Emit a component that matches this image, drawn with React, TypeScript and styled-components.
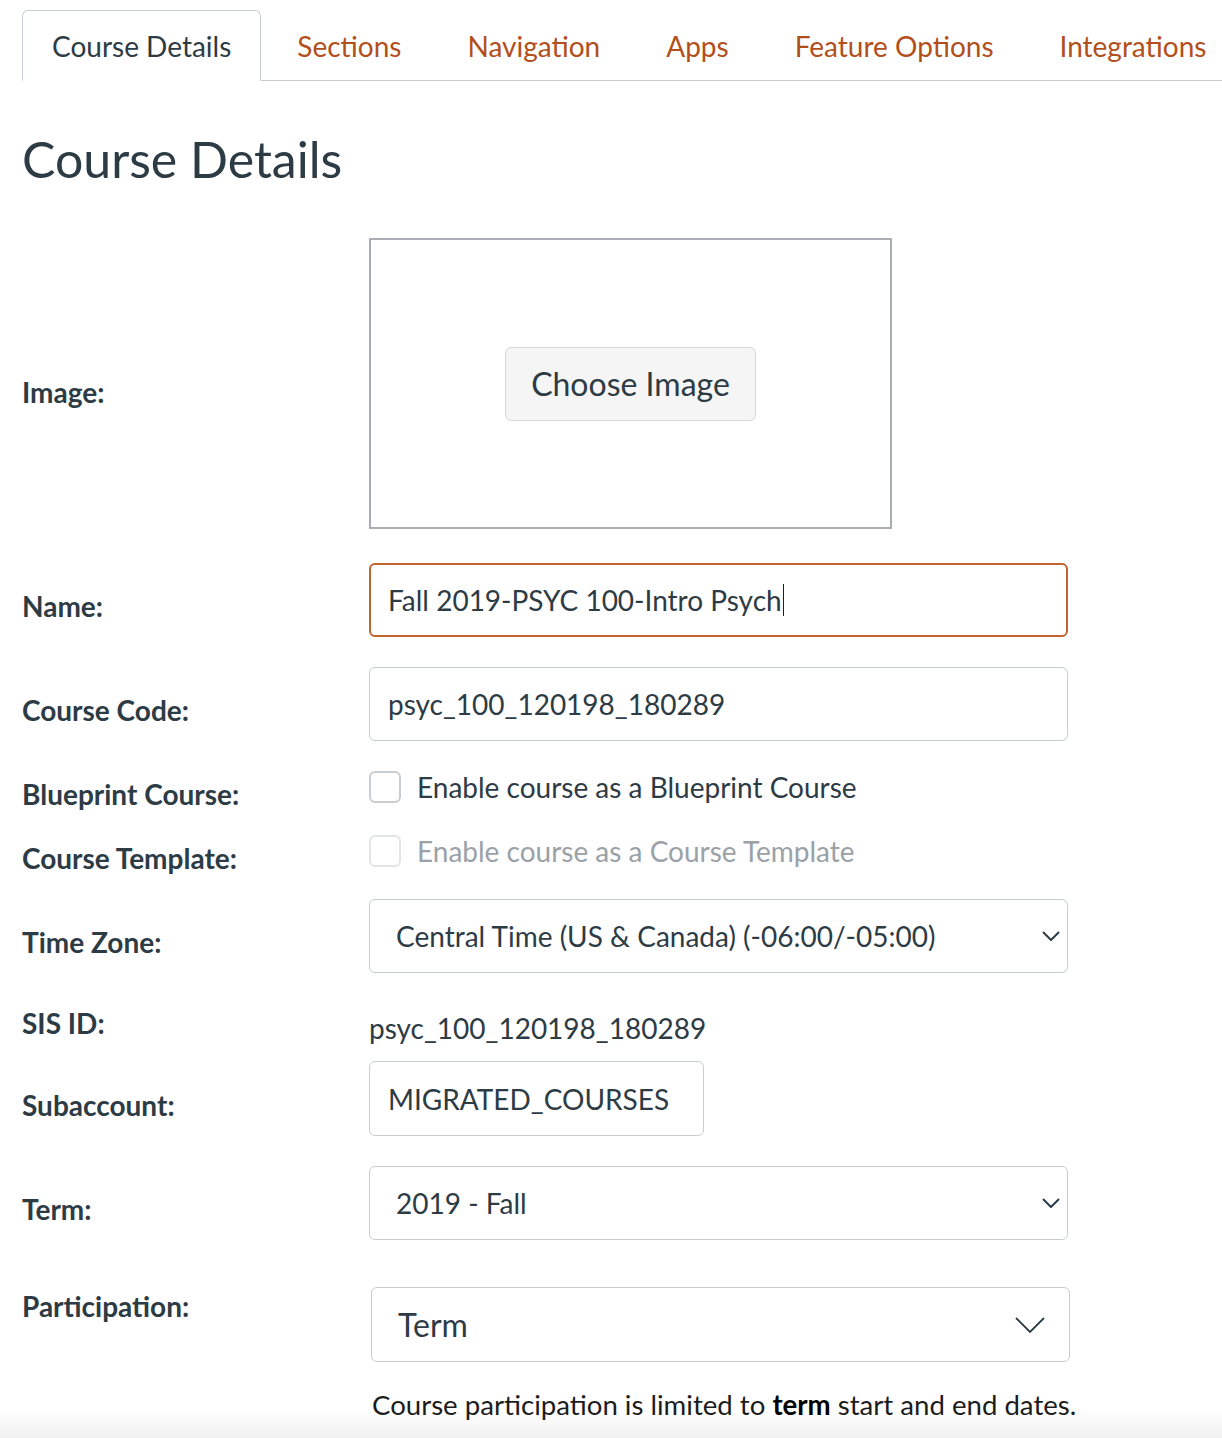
import React from "react";
import styled, { createGlobalStyle } from "styled-components";

const GlobalStyle = createGlobalStyle`
  html, body {
    margin: 0;
    padding: 0;
  }
  body {
    font-family: Lato, "Helvetica Neue", Arial, sans-serif;
    color: #2d3b45;
    background: linear-gradient(180deg, #ffffff 0px, #ffffff 1410px, #f1f1f1 1438px) no-repeat;
    min-height: 1438px;
  }
  * { box-sizing: border-box; }
`;

const Page = styled.div`
  padding-top: 10px;
  min-height: 1438px;
`;

const TabList = styled.ul`
  display: flex;
  list-style: none;
  margin: 0 0 0 22px;
  padding: 0;
  border-bottom: 1px solid #c7cdd1;
`;

const Tab = styled.li<{ $active?: boolean }>`
  display: flex;
  align-items: center;
  height: 71px;
  margin: 0 6px -1px 0;
  padding: 0 29px;
  border: 1px solid ${(p) => (p.$active ? "#c7cdd1" : "transparent")};
  border-bottom-color: ${(p) => (p.$active ? "#ffffff" : "transparent")};
  border-radius: 6px 6px 0 0;
  background: ${(p) => (p.$active ? "#ffffff" : "transparent")};
  font-size: 28px;
  line-height: 32px;
  color: ${(p) => (p.$active ? "#2d3b45" : "#b24f1b")};
  white-space: nowrap;
`;

const Heading = styled.h1`
  margin: 50px 0 0;
  padding-left: 22px;
  font-size: 50px;
  line-height: 56px;
  font-weight: 400;
  color: #2d3b45;
`;

const Form = styled.div`
  padding: 0 22px;
`;

const Row = styled.div<{ $mt: number }>`
  display: grid;
  grid-template-columns: 347px auto;
  align-items: start;
  margin-top: ${(p) => p.$mt}px;
`;

const Label = styled.div<{ $pad: number }>`
  padding-top: ${(p) => p.$pad}px;
  font-size: 28px;
  line-height: 32px;
  font-weight: 700;
  color: #2d3b45;
  white-space: nowrap;
`;

const ImageBox = styled.div`
  width: 523px;
  height: 291px;
  border: 2px solid #a8aeb3;
  display: flex;
  align-items: center;
  justify-content: center;
  background: #fff;
`;

const ChooseButton = styled.button`
  height: 74px;
  padding: 0 25px;
  background: #f5f5f5;
  border: 1px solid #d6d9db;
  border-radius: 6px;
  font-family: inherit;
  font-size: 32px;
  color: #2d3b45;
`;

const Field = styled.div<{ $focused?: boolean; $inline?: boolean }>`
  display: flex;
  align-items: center;
  width: ${(p) => (p.$inline ? "auto" : "699px")};
  justify-self: start;
  height: ${(p) => (p.$inline ? "75px" : "74px")};
  padding: ${(p) => (p.$focused ? "0 17px" : p.$inline ? "0 34px 0 18px" : "0 18px")};
  border: ${(p) => (p.$focused ? "2px solid #c0642f" : "1px solid #c7cdd1")};
  border-radius: 6px;
  font-size: 28px;
  line-height: 32px;
  color: #2d3b45;
  background: #fff;
  white-space: nowrap;
`;

const Caret = styled.span`
  display: inline-block;
  width: 0;
  height: 32px;
  border-right: 1.5px solid #1f1f1f;
  margin-left: 1px;
  vertical-align: middle;
`;

const Select = styled.div<{ $large?: boolean }>`
  display: flex;
  align-items: center;
  justify-content: space-between;
  width: 699px;
  height: ${(p) => (p.$large ? "75px" : "74px")};
  margin-left: ${(p) => (p.$large ? "2px" : "0")};
  padding: ${(p) => (p.$large ? "0 24px 0 26px" : "0 7px 0 26px")};
  border: 1px solid #c7cdd1;
  border-radius: 6px;
  font-size: ${(p) => (p.$large ? "32px" : "28px")};
  line-height: 32px;
  color: #2d3b45;
  background: #fff;
  white-space: nowrap;
`;

const CheckRow = styled.label<{ $disabled?: boolean }>`
  display: flex;
  align-items: center;
  gap: 16px;
  font-size: 28px;
  line-height: 32px;
  color: ${(p) => (p.$disabled ? "#9aa1a7" : "#2d3b45")};
  white-space: nowrap;
`;

const Box = styled.span<{ $disabled?: boolean }>`
  display: inline-block;
  width: 32px;
  height: 32px;
  border: 2px solid ${(p) => (p.$disabled ? "#e3e6e8" : "#c7cdd1")};
  border-radius: 6px;
  background: #fff;
  flex: none;
`;

const PlainValue = styled.div<{ $pad: number }>`
  padding-top: ${(p) => p.$pad}px;
  font-size: 28px;
  line-height: 32px;
  color: #2d3b45;
`;

const ControlStack = styled.div`
  display: flex;
  flex-direction: column;
  align-items: flex-start;
`;

const Help = styled.p`
  margin: 27px 0 0 3px;
  font-size: 27.6px;
  line-height: 32px;
  color: #1c1c1c;
  white-space: nowrap;
  b { font-weight: 700; color: #000; }
`;

const Chevron: React.FC<{ large?: boolean }> = ({ large }) =>
  large ? (
    <svg width="30" height="16" viewBox="0 0 30 16" aria-hidden="true">
      <path d="M1 1 L15 15 L29 1" fill="none" stroke="#2d3b45" strokeWidth="1.8" />
    </svg>
  ) : (
    <svg width="18" height="10" viewBox="0 0 18 10" aria-hidden="true">
      <path d="M1 1 L9 9 L17 1" fill="none" stroke="#2d3b45" strokeWidth="2" />
    </svg>
  );

const tabs = ["Course Details", "Sections", "Navigation", "Apps", "Feature Options", "Integrations"];

export default function App() {
  return (
    <>
      <GlobalStyle />
      <Page>
        <TabList>
          {tabs.map((t, i) => (
            <Tab key={t} $active={i === 0}>
              {t}
            </Tab>
          ))}
        </TabList>

        <Heading>Course Details</Heading>

        <Form>
          <Row $mt={51}>
            <Label $pad={138}>Image:</Label>
            <ImageBox>
              <ChooseButton type="button">Choose Image</ChooseButton>
            </ImageBox>
          </Row>

          <Row $mt={34}>
            <Label $pad={27}>Name:</Label>
            <Field $focused>
              Fall 2019-PSYC 100-Intro Psych
              <Caret />
            </Field>
          </Row>

          <Row $mt={30}>
            <Label $pad={27}>Course Code:</Label>
            <Field>psyc_100_120198_180289</Field>
          </Row>

          <Row $mt={30}>
            <Label $pad={7}>Blueprint Course:</Label>
            <CheckRow>
              <Box />
              Enable course as a Blueprint Course
            </CheckRow>
          </Row>

          <Row $mt={25}>
            <Label $pad={7}>Course Template:</Label>
            <CheckRow $disabled>
              <Box $disabled />
              Enable course as a Course Template
            </CheckRow>
          </Row>

          <Row $mt={25}>
            <Label $pad={27}>Time Zone:</Label>
            <Select>
              <span>Central Time (US &amp; Canada) (-06:00/-05:00)</span>
              <Chevron />
            </Select>
          </Row>

          <Row $mt={34}>
            <Label $pad={0}>SIS ID:</Label>
            <PlainValue $pad={5}>psyc_100_120198_180289</PlainValue>
          </Row>

          <Row $mt={17}>
            <Label $pad={28}>Subaccount:</Label>
            <Field $inline>MIGRATED_COURSES</Field>
          </Row>

          <Row $mt={30}>
            <Label $pad={27}>Term:</Label>
            <Select>
              <span>2019 - Fall</span>
              <Chevron />
            </Select>
          </Row>

          <Row $mt={47}>
            <Label $pad={3}>Participation:</Label>
            <ControlStack>
              <Select $large>
                <span>Term</span>
                <Chevron large />
              </Select>
              <Help>
                Course participation is limited to <b>term</b> start and end dates.
              </Help>
            </ControlStack>
          </Row>
        </Form>
      </Page>
    </>
  );
}
